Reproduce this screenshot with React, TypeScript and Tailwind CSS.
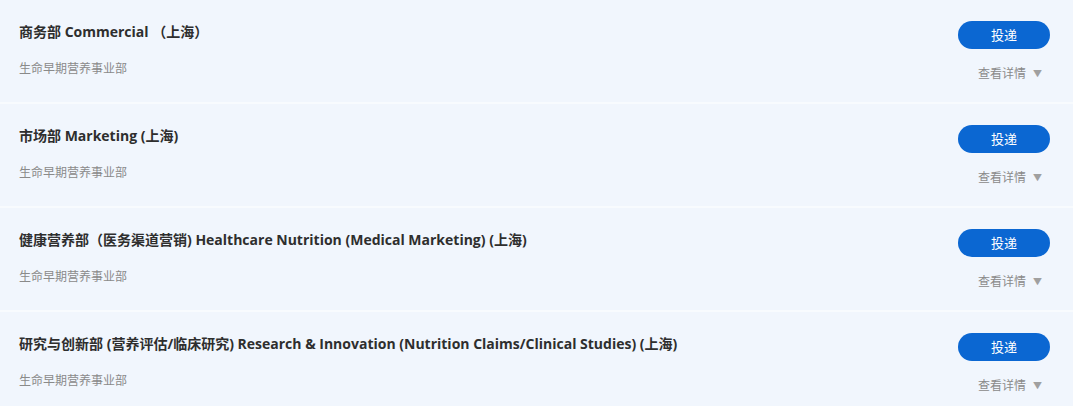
const JOBS = [
  { title: '商务部 Commercial （上海）', dept: '生命早期营养事业部' },
  { title: '市场部 Marketing (上海)', dept: '生命早期营养事业部' },
  { title: '健康营养部（医务渠道营销) Healthcare Nutrition (Medical Marketing) (上海)', dept: '生命早期营养事业部' },
  { title: '研究与创新部 (营养评估/临床研究) Research & Innovation (Nutrition Claims/Clinical Studies) (上海)', dept: '生命早期营养事业部' },
]

export default function App() {
  return (
    <div
      className="w-[1080px] h-[406px] overflow-hidden bg-white"
      style={{ fontFamily: '"Open Sans", "Noto Sans CJK SC", sans-serif' }}
    >
      <div className="w-[1073px] flex flex-col gap-[2px] bg-[#f8fbfe]">
        {JOBS.map((job, i) => (
          <div key={i} className="h-[102px] shrink-0 bg-[#f1f6fd] flex justify-between pl-[19px] pr-[23px]">
            <div className="flex flex-col pt-[23px]">
              <p className="text-[14px] leading-[18px] font-bold text-[#2e2e2e]">{job.title}</p>
              <p className="mt-[20px] text-[12px] leading-[16px] text-[#8a8a8a]">{job.dept}</p>
            </div>
            <div className="flex flex-col items-end pt-[21px]">
              <button className="w-[92px] h-[28px] rounded-full bg-[#0b67d2] text-white text-[13px] leading-none">
                投递
              </button>
              <button className="mt-[17px] mr-[8px] flex items-center gap-[7px] text-[12px] leading-[16px] text-[#8a8a8a]">
                查看详情
                <span className="text-[9px] text-[#a0a0a0]">▼</span>
              </button>
            </div>
          </div>
        ))}
      </div>
    </div>
  )
}
